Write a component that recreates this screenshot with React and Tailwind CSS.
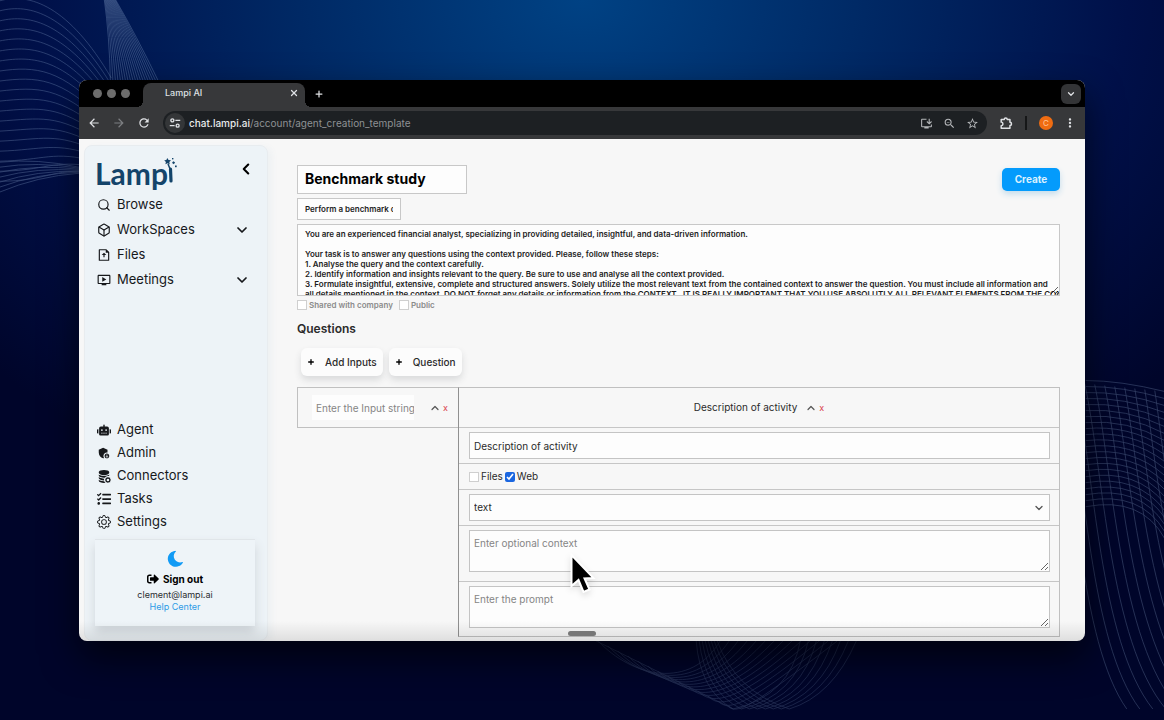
import React, { useState } from "react";
import { Search, Box, ChevronDown, ChevronLeft, ChevronUp, Plus, X } from "lucide-react";
import { FaRobot, FaTasks, FaSignOutAlt, FaMoon } from "react-icons/fa";
import { BsDatabaseFillGear, BsGear } from "react-icons/bs";
import { RiFileUploadLine } from "react-icons/ri";
import {
  MdAdminPanelSettings, MdArrowBack, MdArrowForward, MdMoreVert,
  MdOutlineInstallDesktop, MdOutlineOndemandVideo, MdOutlineZoomOut, MdRefresh, MdStarBorder,
} from "react-icons/md";

const PROMPT = `You are an experienced financial analyst, specializing in providing detailed, insightful, and data-driven information.

Your task is to answer any questions using the context provided. Please, follow these steps:
1. Analyse the query and the context carefully.
2. Identify information and insights relevant to the query. Be sure to use and analyse all the context provided.
3. Formulate insightful, extensive, complete and structured answers. Solely utilize the most relevant text from the contained context to answer the question. You must include all information and
all details mentioned in the context. DO NOT forget any details or information from the CONTEXT . IT IS REALLY IMPORTANT THAT YOU USE ABSOLUTLY ALL RELEVANT ELEMENTS FROM THE CONTEXT AND`;

const mainNav = [
  { label: "Browse", icon: Search },
  { label: "WorkSpaces", icon: Box, expandable: true },
  { label: "Files", icon: RiFileUploadLine },
  { label: "Meetings", icon: MdOutlineOndemandVideo, expandable: true },
];

const adminNav = [
  { label: "Agent", icon: FaRobot },
  { label: "Admin", icon: MdAdminPanelSettings },
  { label: "Connectors", icon: BsDatabaseFillGear },
  { label: "Tasks", icon: FaTasks },
  { label: "Settings", icon: BsGear },
];

const range = (n) => Array.from({ length: n }, (_, i) => i);

// Thin line meshes in the corners of the desktop
function Waves() {
  return (
    <svg
      className="absolute inset-0 h-full w-full"
      viewBox="0 0 1164 720"
      preserveAspectRatio="xMidYMid slice"
      fill="none"
      stroke="#8fa9cf"
      strokeWidth="0.7"
      aria-hidden="true"
    >
      <g opacity="0.42">
        {range(19).map(i => (
          <path key={i} d={`M0 ${1 + i * 10} C${30 + i} ${-8 + i * 10.5} ${70 - i} ${6 + i * 9} ${112 - i} ${78 + i * 5.2}`} />
        ))}
        {range(7).map(i => (
          <path key={i} d={`M0 ${192 - i * 5} Q38 ${176 - i * 3} 80 ${173 - i}`} />
        ))}
      </g>
      <g opacity="0.45">
        {range(20).map(i => (
          <path key={i} d={`M${105 + i * 0.6} 0 Q${110 + i * 1.4} 35 ${111 + i * 2.5} 80`} />
        ))}
      </g>
      <g opacity="0.38">
        {range(22).map(i => (
          <path key={i} d={`M1085 ${380 + i * 6} Q${1120 + i} ${380 + i * 5.5} 1164 ${391 + i * 7}`} />
        ))}
        {range(13).map(i => (
          <path key={i} d={`M${1054 + i * 10} ${380 + i} C${1076 + i * 9} 470 ${1078 + i * 10} 640 ${1126 + i * 13} 708`} />
        ))}
      </g>
      <g opacity="0.26">
        {range(14).map(i => (
          <path key={i} d={`M${598 + i * 10} ${640 + i * 5} C${632 + i * 8} ${676 + i * 3} ${690 + i * 5} ${690 + i} ${720 + i * 9} 640`} />
        ))}
        {range(8).map(i => (
          <path key={i} d={`M${696 + i * 3} 640 Q${700 + i * 5} 690 ${733 + i * 8} 708 Q${790 + i * 6} 695 ${800 + i * 8} 640`} />
        ))}
        <path d="M596 640 L733 708" />
      </g>
    </svg>
  );
}

function SiteInfoIcon() {
  return (
    <svg viewBox="0 0 16 16" className="h-3 w-3" fill="none" stroke="currentColor" strokeWidth="1.8">
      <circle cx="4.5" cy="4.5" r="2" />
      <path d="M8.5 4.5H15M1 11.5h6.5" />
      <circle cx="11.5" cy="11.5" r="2" />
    </svg>
  );
}

function ExtensionIcon() {
  return (
    <svg viewBox="0 0 16 16" className="h-3.5 w-3.5" fill="none" stroke="currentColor" strokeWidth="1.7" strokeLinejoin="round">
      <path d="M2.5 4H6a1.7 1.7 0 0 1 3.400 0H12.500V7.200a1.800 1.800 0 0 1 0 3.600V14H2.500V11a2 2 0 0 0 0-4Z" />
    </svg>
  );
}

function BrowserBar() {
  return (
    <header className="text-[#dfe1e4]">
      <div className="flex h-[27px] items-end bg-black pl-3.5 pr-1">
        <div className="flex gap-[5px] self-center">
          <span className="h-[9px] w-[9px] rounded-full bg-[#6d6d6d]" />
          <span className="h-[9px] w-[9px] rounded-full bg-[#6d6d6d]" />
          <span className="h-[9px] w-[9px] rounded-full bg-[#6d6d6d]" />
        </div>
        <div className="relative ml-[13px] flex h-6 w-[162px] items-center justify-between rounded-t-lg bg-[#37383a] pb-1 pl-[22px] pr-1.5 before:absolute before:bottom-0 before:-left-1.5 before:h-1.5 before:w-1.5 before:bg-[radial-gradient(circle_at_0_0,#000_6px,#37383a_6px)] after:absolute after:-right-1.5 after:bottom-0 after:h-1.5 after:w-1.5 after:bg-[radial-gradient(circle_at_100%_0,#000_6px,#37383a_6px)]">
          <span className="text-[9px] font-medium">Lampi AI</span>
          <button aria-label="Close tab"><X className="h-2.5 w-2.5" strokeWidth={3} /></button>
        </div>
        <button aria-label="New tab" className="ml-[9px] self-center"><Plus className="h-2.5 w-2.5" strokeWidth={3} /></button>
        <button aria-label="Search tabs" className="ml-auto flex h-5 w-5 items-center justify-center self-center rounded-md bg-[#333436]">
          <ChevronDown className="h-2.5 w-2.5" strokeWidth={3} />
        </button>
      </div>
      <div className="flex h-8 items-center bg-[#37383a] px-2">
        <button aria-label="Back"><MdArrowBack className="h-3.5 w-3.5" /></button>
        <button aria-label="Forward" className="ml-[11px] text-[#7d7f82]"><MdArrowForward className="h-3.5 w-3.5" /></button>
        <button aria-label="Reload" className="ml-[11px]"><MdRefresh className="h-3.5 w-3.5" /></button>
        <div className="ml-3 flex h-6 flex-1 items-center rounded-full bg-[#1d2023] pl-0.5 pr-2">
          <span className="flex h-5 w-5 items-center justify-center rounded-full bg-[#343638]"><SiteInfoIcon /></span>
          <span className="ml-1 text-[10px] text-[#8e9194]">
            <span className="font-medium text-[#e8eaed]">chat.lampi.ai</span>/account/agent_creation_template
          </span>
          <span className="ml-auto flex gap-2.5 text-[#b4b6b9]">
            <MdOutlineInstallDesktop className="h-[13px] w-[13px]" />
            <MdOutlineZoomOut className="h-[13px] w-[13px]" />
            <MdStarBorder className="h-[13px] w-[13px]" />
          </span>
        </div>
        <button aria-label="Extensions" className="ml-3"><ExtensionIcon /></button>
        <span className="ml-3 h-3.5 w-0.5 bg-[#161718]" />
        <button aria-label="Profile" className="ml-3 flex h-3.5 w-3.5 items-center justify-center rounded-full bg-[#ef6c12] text-[8px] text-[#ffc79a]">C</button>
        <button aria-label="Menu" className="ml-2.5"><MdMoreVert className="h-3.5 w-3.5" /></button>
      </div>
    </header>
  );
}

function Logo() {
  return (
    <div className="flex h-9 items-start text-[#14446a]">
      <span className="font-['Lato',sans-serif] text-[30px] font-bold leading-[34px]">Lamp</span>
      <svg viewBox="0 0 14 30" className="-ml-1 h-[30px] w-3.5" fill="currentColor" aria-hidden="true">
        <path d="M6.500 13 L7 25" stroke="currentColor" strokeWidth="3.200" strokeLinecap="round" />
        <path d="M4 8 L6.500 14" stroke="currentColor" strokeWidth="1.500" />
        <path d="M3.200 2 L4.600 4 L7 4.200 L5.300 6 L5.800 8.400 L3.600 7.200 L1.400 8.200 L1.900 5.900 L0.200 4.200 L2.400 4 Z" />
        <rect x="8" y="2" width="1.400" height="1.400" />
        <rect x="8.500" y="5.500" width="2.200" height="2.200" transform="rotate(30 9.500 6.500)" />
        <rect x="11" y="9.500" width="1.700" height="1.700" />
      </svg>
    </div>
  );
}

function NavItem({ label, icon: Icon, expandable }) {
  return (
    <a href="#" className="flex items-center gap-1.5 pl-0.5 text-[13px] text-[#16181b]">
      <Icon className="h-3.5 w-3.5" />
      {label}
      {expandable && <ChevronDown className="ml-auto mr-[5px] h-4 w-4" strokeWidth={2.6} />}
    </a>
  );
}

function Sidebar() {
  return (
    <aside className="flex w-[184px] shrink-0 flex-col rounded-lg border border-[#e8ecef] bg-[#edf3f7] pb-3.5 pl-2.5 pr-3 pt-2.5 shadow-[4px_2px_6px_#eef1f3]">
      <div className="flex items-start justify-between">
        <Logo />
        <button aria-label="Collapse sidebar" className="pt-1"><ChevronLeft className="h-[18px] w-[18px]" strokeWidth={2.8} /></button>
      </div>
      <nav className="grid auto-rows-[25px]">
        {mainNav.map(item => <NavItem key={item.label} {...item} />)}
      </nav>
      <nav className="mt-auto grid auto-rows-[23px]">
        {adminNav.map(item => <NavItem key={item.label} {...item} />)}
      </nav>
      <div className="mt-1.5 flex h-[87px] flex-col items-center border-t border-[#e0e5e9] bg-[#eef4f8] pt-[11px] shadow-[0_6px_10px_#cfd5da]">
        <FaMoon className="h-4 w-4 -rotate-12 text-[#129bf5]" />
        <button className="mt-1.5 flex h-3 items-center gap-1 text-[10px] font-bold text-black">
          <FaSignOutAlt className="h-3 w-3" />
          Sign out
        </button>
        <span className="mt-1 text-[9px] leading-3 text-[#2a2d30]">clement@lampi.ai</span>
        <a href="#" className="text-[9px] leading-3 text-[#2d9be6]">Help Center</a>
      </div>
    </aside>
  );
}

function Tick({ label, ...props }) {
  return (
    <label className="flex items-center gap-0.5">
      <input
        type="checkbox"
        className="h-2.5 w-2.5 appearance-none border border-[#cfcfcf] bg-white accent-[#1a66e0] checked:appearance-auto"
        {...props}
      />
      {label}
    </label>
  );
}

function ColumnActions() {
  return (
    <span className="flex items-center gap-0.5">
      <button aria-label="Collapse column"><ChevronUp className="h-3 w-3 text-[#555]" strokeWidth={2.4} /></button>
      <button aria-label="Remove column" className="text-[9px] text-[#d9414e]">x</button>
    </span>
  );
}

function AddButton({ children }) {
  return (
    <button className="flex h-7 items-center gap-2.5 rounded-md bg-[#fcfcfc] px-1.5 text-[10px] font-medium text-[#2b2b2b] shadow-[0_4px_7px_#d9dadb]">
      <Plus className="h-2 w-2 text-black" strokeWidth={4} />
      {children}
    </button>
  );
}

const field = "block w-full border border-[#c4c4c4] bg-[#fdfdfd] px-1 text-[10px] text-[#2b2b2b] placeholder:text-[#858585]";

function QuestionsGrid() {
  const [question, setQuestion] = useState("Description of activity");

  return (
    <div className="mt-[11px] flex items-start">
      <div className="flex h-[41px] w-[161px] items-center justify-between border border-r-0 border-[#c0c0c0] pl-3.5 pr-2.5">
        <input
          aria-label="Input string"
          placeholder="Enter the Input string"
          className="h-[25px] w-[110px] border-r-8 border-transparent bg-[#fdfdfd] bg-clip-padding pl-1 text-[10px] placeholder:text-[#858585]"
        />
        <ColumnActions />
      </div>
      <div className="min-w-0 flex-1 divide-y divide-[#c6c6c6] border border-[#c0c0c0] border-l-[#909090]">
        <div className="flex h-10 items-center justify-center gap-2 text-[10px] text-[#2b2b2b]">
          {question}
          <ColumnActions />
        </div>
        <div className="pb-1 pl-2.5 pr-[9px] pt-1">
          <input aria-label="Question" value={question} onChange={e => setQuestion(e.target.value)} className={`${field} h-[27px]`} />
        </div>
        <div className="flex h-[26px] items-center gap-0.5 px-2.5 text-[10px] text-[#2b2b2b]">
          <Tick label="Files" />
          <Tick label="Web" defaultChecked />
        </div>
        <div className="relative py-1 pl-2.5 pr-[9px]">
          <select aria-label="Answer type" defaultValue="text" className={`${field} h-[27px] appearance-none`}>
            <option value="text">text</option>
            <option value="table">table</option>
          </select>
          <ChevronDown className="pointer-events-none absolute right-3.5 top-1/2 h-3 w-3 -translate-y-1/2 text-[#555]" strokeWidth={2.6} />
        </div>
        <div className="pb-[9px] pl-2.5 pr-[9px] pt-1">
          <textarea aria-label="Context" placeholder="Enter optional context" className={`${field} h-[42px] resize-y pt-[5px]`} />
        </div>
        <div className="pb-2 pl-2.5 pr-[9px] pt-1">
          <textarea aria-label="Prompt" placeholder="Enter the prompt" className={`${field} h-[42px] resize-y pt-[5px]`} />
        </div>
      </div>
    </div>
  );
}

function TemplateForm() {
  return (
    <main className="min-w-0 flex-1 pb-1 pl-[29px] pr-[25px] pt-5">
      <div className="flex items-start justify-between">
        <input aria-label="Template name" defaultValue="Benchmark study" className="h-[29px] w-[170px] border border-[#c8c8c8] bg-[#fdfdfd] px-[7px] pb-0.5 text-sm font-bold text-black" />
        <button className="mt-[3px] h-[23px] w-[58px] rounded-[5px] bg-[#049bfc] text-[10px] font-bold text-[#d9f0ff] shadow-[0_3px_6px_#c3dcec]">Create</button>
      </div>
      <input
        aria-label="Description"
        defaultValue="Perform a benchmark on companies"
        className="mt-1 block h-[22px] w-[104px] border border-[#c8c8c8] bg-[#fdfdfd] px-[7px] text-[8px] font-semibold text-[#1c1c1c]"
      />
      <textarea
        aria-label="System prompt"
        spellCheck={false}
        defaultValue={PROMPT}
        className="mt-1 block h-[72px] w-full resize-y overflow-hidden whitespace-pre border border-[#c8c8c8] bg-[#fdfdfd] px-[7px] pt-1 text-[8px] font-semibold leading-[10px] text-[#1c1c1c]"
      />
      <div className="mt-1 flex h-2.5 items-center gap-1.5 text-[8px] font-semibold text-[#8b8b8b]">
        <Tick label="Shared with company" />
        <Tick label="Public" />
      </div>
      <h2 className="mt-2.5 text-xs font-semibold leading-[18px] text-[#2b2b2b]">Questions</h2>
      <div className="mt-2.5 flex gap-1.5 pl-1">
        <AddButton>Add Inputs</AddButton>
        <AddButton>Question</AddButton>
      </div>
      <QuestionsGrid />
    </main>
  );
}

export default function App() {
  return (
    <div className="relative min-h-screen overflow-hidden bg-[#00052a] bg-[radial-gradient(ellipse_780px_560px_at_50%_0,#004284_0%,#002a66_35%,#001049_70%,#00052a_100%)] px-[79px] py-20 font-['Inter',sans-serif]">
      <Waves />
      <div className="relative overflow-hidden rounded-lg bg-[#f7f7f7] shadow-[0_16px_36px_rgba(0,0,0,0.65)]">
        <BrowserBar />
        <div className="flex pl-[5px] pt-1.5">
          <Sidebar />
          <TemplateForm />
        </div>
        <div className="pointer-events-none absolute inset-x-0 bottom-0 h-5 bg-linear-to-b from-transparent to-black/10" />
        <span className="absolute bottom-[5px] left-1/2 h-[5px] w-7 -translate-x-1/2 rounded-full bg-[#777]" />
        <svg viewBox="0 0 26 42" className="pointer-events-none absolute left-[49%] top-[473px] -ml-0.5 h-[42px] w-[26px] drop-shadow-md" aria-hidden="true">
          <path d="M1.500 2 L1.500 33 L8.500 27 L13.500 39 L19.500 36.500 L14.500 25.500 L23.500 25 Z" fill="#000" stroke="#fff" strokeWidth="2" />
        </svg>
      </div>
    </div>
  );
}
